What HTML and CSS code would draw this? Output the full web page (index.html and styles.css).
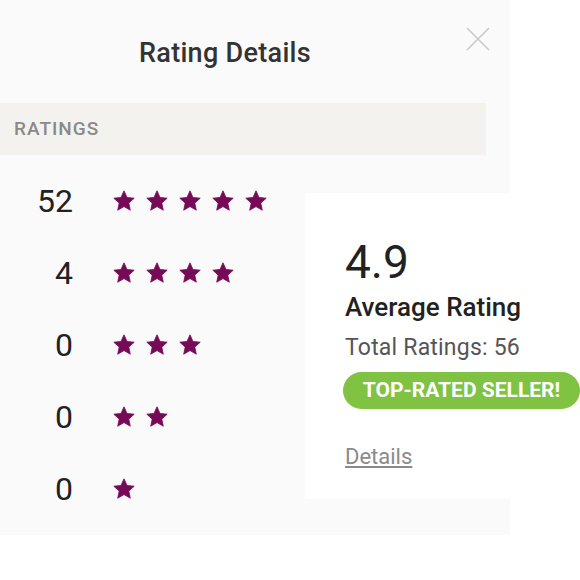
FILE: index.html
```html
<!DOCTYPE html>
<html>
<head>
<meta charset="utf-8">
<link rel="stylesheet" href="styles.css">
</head>
<body>
<div class="panel">
  <div class="head">
    <h1 class="title">Rating Details</h1>
    <svg class="close" width="24" height="24" viewBox="0 0 24 24"><path d="M1 1L23 23M23 1L1 23" stroke="#c9c9c9" stroke-width="1.6" fill="none"/></svg>
  </div>
  <div class="band">RATINGS</div>
  <div class="body">
    <div class="rows">
      <div class="row"><span class="num">52</span><span class="stars"><svg class="star" viewBox="0 0 24 24"><path d="M12 1.8l3 6.6 7.2.8-5.4 4.9 1.5 7.1L12 17.6l-6.3 3.6 1.5-7.1L1.8 9.2 9 8.4z"/></svg><svg class="star" viewBox="0 0 24 24"><path d="M12 1.8l3 6.6 7.2.8-5.4 4.9 1.5 7.1L12 17.6l-6.3 3.6 1.5-7.1L1.8 9.2 9 8.4z"/></svg><svg class="star" viewBox="0 0 24 24"><path d="M12 1.8l3 6.6 7.2.8-5.4 4.9 1.5 7.1L12 17.6l-6.3 3.6 1.5-7.1L1.8 9.2 9 8.4z"/></svg><svg class="star" viewBox="0 0 24 24"><path d="M12 1.8l3 6.6 7.2.8-5.4 4.9 1.5 7.1L12 17.6l-6.3 3.6 1.5-7.1L1.8 9.2 9 8.4z"/></svg><svg class="star" viewBox="0 0 24 24"><path d="M12 1.8l3 6.6 7.2.8-5.4 4.9 1.5 7.1L12 17.6l-6.3 3.6 1.5-7.1L1.8 9.2 9 8.4z"/></svg></span></div>
      <div class="row"><span class="num">4</span><span class="stars"><svg class="star" viewBox="0 0 24 24"><path d="M12 1.8l3 6.6 7.2.8-5.4 4.9 1.5 7.1L12 17.6l-6.3 3.6 1.5-7.1L1.8 9.2 9 8.4z"/></svg><svg class="star" viewBox="0 0 24 24"><path d="M12 1.8l3 6.6 7.2.8-5.4 4.9 1.5 7.1L12 17.6l-6.3 3.6 1.5-7.1L1.8 9.2 9 8.4z"/></svg><svg class="star" viewBox="0 0 24 24"><path d="M12 1.8l3 6.6 7.2.8-5.4 4.9 1.5 7.1L12 17.6l-6.3 3.6 1.5-7.1L1.8 9.2 9 8.4z"/></svg><svg class="star" viewBox="0 0 24 24"><path d="M12 1.8l3 6.6 7.2.8-5.4 4.9 1.5 7.1L12 17.6l-6.3 3.6 1.5-7.1L1.8 9.2 9 8.4z"/></svg></span></div>
      <div class="row"><span class="num">0</span><span class="stars"><svg class="star" viewBox="0 0 24 24"><path d="M12 1.8l3 6.6 7.2.8-5.4 4.9 1.5 7.1L12 17.6l-6.3 3.6 1.5-7.1L1.8 9.2 9 8.4z"/></svg><svg class="star" viewBox="0 0 24 24"><path d="M12 1.8l3 6.6 7.2.8-5.4 4.9 1.5 7.1L12 17.6l-6.3 3.6 1.5-7.1L1.8 9.2 9 8.4z"/></svg><svg class="star" viewBox="0 0 24 24"><path d="M12 1.8l3 6.6 7.2.8-5.4 4.9 1.5 7.1L12 17.6l-6.3 3.6 1.5-7.1L1.8 9.2 9 8.4z"/></svg></span></div>
      <div class="row"><span class="num">0</span><span class="stars"><svg class="star" viewBox="0 0 24 24"><path d="M12 1.8l3 6.6 7.2.8-5.4 4.9 1.5 7.1L12 17.6l-6.3 3.6 1.5-7.1L1.8 9.2 9 8.4z"/></svg><svg class="star" viewBox="0 0 24 24"><path d="M12 1.8l3 6.6 7.2.8-5.4 4.9 1.5 7.1L12 17.6l-6.3 3.6 1.5-7.1L1.8 9.2 9 8.4z"/></svg></span></div>
      <div class="row"><span class="num">0</span><span class="stars"><svg class="star" viewBox="0 0 24 24"><path d="M12 1.8l3 6.6 7.2.8-5.4 4.9 1.5 7.1L12 17.6l-6.3 3.6 1.5-7.1L1.8 9.2 9 8.4z"/></svg></span></div>
    </div>
    <div class="card">
      <div class="avg">4.9</div>
      <div class="avg-label">Average Rating</div>
      <div class="total">Total Ratings: 56</div>
      <div class="pill">TOP-RATED SELLER!</div>
      <a class="details" href="#">Details</a>
    </div>
  </div>
</div>
</body>
</html>
```
FILE: styles.css
```css
html, body {
  margin: 0;
  padding: 0;
  background: #ffffff;
  font-family: Roboto, "Liberation Sans", sans-serif;
  overflow: hidden;
}
.panel {
  width: 510px;
  height: 535px;
  background: #fafafa;
  box-sizing: border-box;
  padding-right: 24px;
}
.head {
  position: relative;
  height: 103px;
  display: flex;
  justify-content: flex-start;
}
.title {
  margin: 0;
  padding-top: 36px;
  padding-left: 139px;
  font-size: 27px;
  line-height: 34px;
  font-weight: 500;
  color: #333333;
  letter-spacing: 0.3px;
}
.close {
  position: absolute;
  left: 466px;
  top: 27px;
}
.band {
  height: 52px;
  background: #f3f2ef;
  box-sizing: border-box;
  padding-left: 14px;
  font-size: 19px;
  line-height: 52px;
  font-weight: 500;
  color: #8a8a8a;
  letter-spacing: 1px;
}
.body {
  display: flex;
  align-items: flex-start;
}
.rows {
  width: 305px;
  flex: none;
  padding-top: 10px;
}
.row {
  height: 72px;
  display: flex;
  align-items: center;
}
.num {
  width: 73px;
  text-align: right;
  font-size: 32px;
  color: #222222;
  font-weight: 400;
  margin-right: 39px;
}
.stars {
  display: flex;
  gap: 9px;
}
.star {
  width: 24px;
  height: 24px;
  fill: #770a57;
  stroke: #770a57;
  stroke-width: 0.8;
  stroke-linejoin: round;
}
.card {
  flex: none;
  margin-top: 38px;
  width: 275px;
  height: 306px;
  background: #ffffff;
  box-sizing: border-box;
  padding: 44px 0 0 40px;
}
.avg {
  font-size: 46px;
  line-height: 50px;
  color: #222222;
}
.avg-label {
  margin-top: 5px;
  font-size: 26px;
  line-height: 30px;
  font-weight: 500;
  color: #222222;
}
.total {
  margin-top: 12px;
  font-size: 23px;
  line-height: 28px;
  color: #555555;
  letter-spacing: 0.2px;
}
.pill {
  margin-top: 10px;
  margin-left: -2px;
  width: 237px;
  height: 37px;
  border-radius: 19px;
  background: #80c242;
  color: #ffffff;
  font-size: 21px;
  font-weight: 700;
  line-height: 37px;
  text-align: center;
}
.details {
  display: inline-block;
  margin-top: 35px;
  font-size: 22px;
  line-height: 26px;
  color: #8a8a8a;
  text-decoration: underline;
}
```
